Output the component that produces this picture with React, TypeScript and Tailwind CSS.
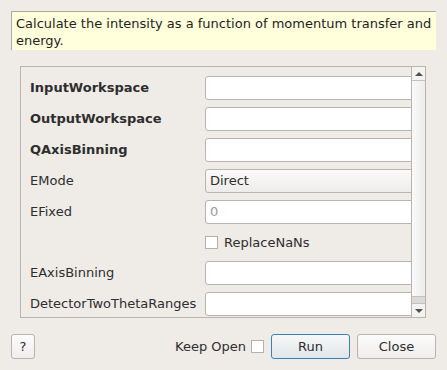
import React from 'react';

type Row =
  | { kind: 'text'; label: string; bold?: boolean; value?: string; placeholder?: string }
  | { kind: 'combo'; label: string; value: string }
  | { kind: 'check'; label: string };

const rows: Row[] = [
  { kind: 'text', label: 'InputWorkspace', bold: true },
  { kind: 'text', label: 'OutputWorkspace', bold: true },
  { kind: 'text', label: 'QAxisBinning', bold: true },
  { kind: 'combo', label: 'EMode', value: 'Direct' },
  { kind: 'text', label: 'EFixed', placeholder: '0' },
  { kind: 'check', label: 'ReplaceNaNs' },
  { kind: 'text', label: 'EAxisBinning' },
  { kind: 'text', label: 'DetectorTwoThetaRanges' },
];

function CheckBox() {
  return <span className="block h-[13px] w-[13px] shrink-0 border border-[#b4b0ac] bg-white" />;
}

function PropertyRow({ row }: { row: Row }) {
  if (row.kind === 'check') {
    return (
      <div className="flex h-[23px] items-center">
        <div className="w-[184px] shrink-0" />
        <CheckBox />
        <span className="ml-[6px] text-[#2e2e2e]">{row.label}</span>
      </div>
    );
  }

  return (
    <div className="flex h-[24px] items-center">
      <div className={`w-[184px] shrink-0 pl-[9px] ${row.bold ? 'font-bold' : ''} text-[#2e2e2e]`}>
        {row.label}
      </div>
      {row.kind === 'combo' ? (
        <div className="flex h-[24px] w-[240px] shrink-0 items-center rounded-[3px] border border-[#b8b4b0] bg-gradient-to-b from-[#fbfbfb] to-[#eeecea] pl-[4px] text-[#2e2e2e]">
          {row.value}
        </div>
      ) : (
        <div className="flex h-[24px] w-[240px] shrink-0 items-center rounded-[3px] border border-[#b8b4b0] bg-white pl-[4px] text-[#9a9a9a]">
          {row.placeholder}
        </div>
      )}
    </div>
  );
}

function Scrollbar() {
  return (
    <div className="flex w-[14px] shrink-0 flex-col border-l border-[#b8b4b0] bg-[#dcdad8]">
      <div className="flex h-[14px] items-center justify-center border-b border-[#c4c0bc] bg-[#f4f3f2]">
        <div className="h-0 w-0 border-x-[4px] border-b-[4px] border-x-transparent border-b-[#505050]" />
      </div>
      <div className="h-[216px] border-b border-[#c4c0bc] bg-gradient-to-r from-[#fafafa] to-[#eeeceb]" />
      <div className="flex-1" />
      <div className="flex h-[14px] items-center justify-center border-t border-[#c4c0bc] bg-[#f4f3f2]">
        <div className="h-0 w-0 border-x-[4px] border-t-[4px] border-x-transparent border-t-[#505050]" />
      </div>
    </div>
  );
}

export default function App() {
  return (
    <div
      className="h-[370px] w-[447px] overflow-hidden bg-[#efebe7] text-[13px] leading-[16px]"
      style={{ fontFamily: '"DejaVu Sans", sans-serif' }}
    >
      <div className="mx-[11px] mt-[11px] h-[39px] border-l border-t border-[#a8a8a8] bg-[#ffffdc] px-[4px] pt-[3px] leading-[17px] text-[#1e1e1e]">
        Calculate the intensity as a function of momentum transfer and energy.
      </div>

      <div className="ml-[20px] mt-[16px] flex h-[252px] w-[406px] border border-[#b8b4b0]">
        <div className="flex flex-1 flex-col gap-[7px] overflow-hidden pt-[9px]">
          {rows.map((row) => (
            <PropertyRow key={row.label} row={row} />
          ))}
        </div>
        <Scrollbar />
      </div>

      <div className="mt-[16px] flex items-center px-[11px]">
        <button className="h-[25px] w-[24px] rounded-[3px] border border-[#b8b4b0] bg-gradient-to-b from-[#fcfcfc] to-[#efedeb] text-[#2e2e2e]">
          ?
        </button>
        <div className="flex-1" />
        <span className="text-[#2e2e2e]">Keep Open</span>
        <span className="ml-[5px]">
          <CheckBox />
        </span>
        <button className="ml-[7px] h-[25px] w-[79px] rounded-[3px] border border-[#3c80b8] bg-gradient-to-b from-[#f6f7f8] to-[#e2e6ea] text-[#2e2e2e]">
          Run
        </button>
        <button className="ml-[7px] h-[25px] w-[79px] rounded-[3px] border border-[#b8b4b0] bg-gradient-to-b from-[#fcfcfc] to-[#efedeb] text-[#2e2e2e]">
          Close
        </button>
      </div>
    </div>
  );
}
